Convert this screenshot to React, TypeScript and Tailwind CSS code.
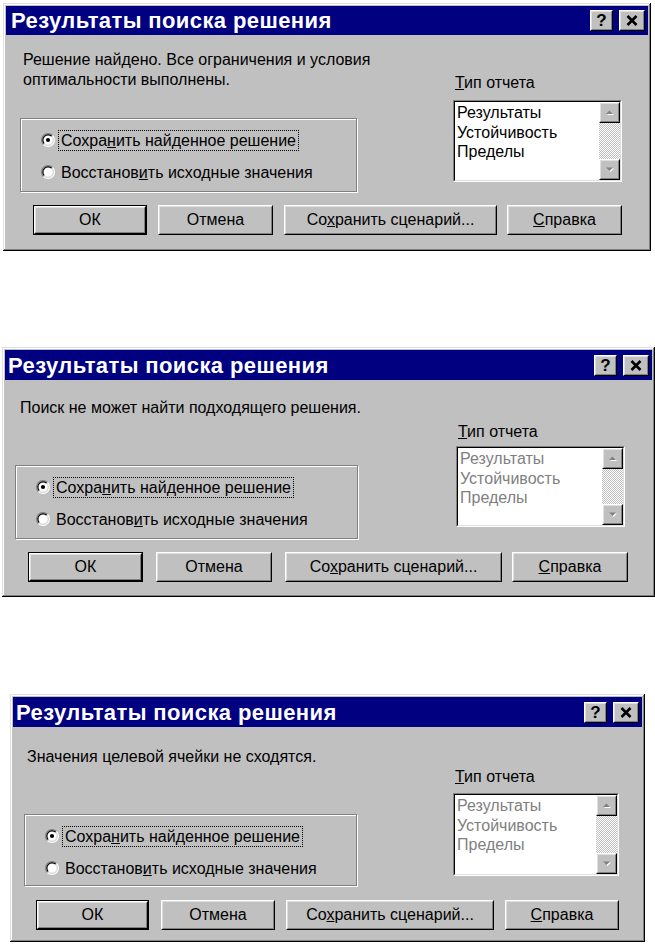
import React from 'react';

type Cfg = {
  box: string;
  titleH: string;
  titlePl: string;
  msg: string[];
  msgCls: string;
  groupCls: string;
  rightCls: string;
  labelCls: string;
  listCls: string;
  btnRow: string;
  btns: [string, string, string, string];
  dim: boolean;
};

const dialogs: Cfg[] = [
  {
    box: 'ml-[3px] mt-[3px] w-[648px] h-[248px]',
    titleH: 'h-[29px]',
    titlePl: 'pl-[5px]',
    msg: ['Решение найдено. Все ограничения и условия', 'оптимальности выполнены.'],
    msgCls: 'pl-[17px] pt-[15px]',
    groupCls: 'ml-[14px] mt-[28px] w-[337px] h-[74px]',
    rightCls: 'mr-[26px] pt-[38px]',
    labelCls: 'pl-[2px]',
    listCls: 'mt-[7px] w-[169px] h-[82px]',
    btnRow: 'mt-[13px] pl-[27px]',
    btns: ['w-[114px]', 'ml-[11px] w-[115px]', 'ml-[11px] w-[213px]', 'ml-[10px] w-[115px]'],
    dim: false,
  },
  {
    box: 'ml-[2px] mt-[96px] w-[653px] h-[250px]',
    titleH: 'h-[30px]',
    titlePl: 'pl-[3px]',
    msg: ['Поиск не может найти подходящего решения.'],
    msgCls: 'pl-[15px] pt-[18px]',
    groupCls: 'ml-[10px] mt-[47px] w-[343px] h-[74px]',
    rightCls: 'mr-[27px] pt-[42px]',
    labelCls: 'pl-[2px]',
    listCls: 'mt-[4px] w-[169px] h-[81px]',
    btnRow: 'mt-[13px] pl-[23px]',
    btns: ['w-[115px]', 'ml-[13px] w-[116px]', 'ml-[13px] w-[217px]', 'ml-[10px] w-[116px]'],
    dim: true,
  },
  {
    box: 'ml-[10px] mt-[97px] w-[635px] h-[248px]',
    titleH: 'h-[30px]',
    titlePl: 'pl-[3px]',
    msg: ['Значения целевой ячейки не сходятся.'],
    msgCls: 'pl-[14px] pt-[20px]',
    groupCls: 'ml-[11px] mt-[47px] w-[333px] h-[72px]',
    rightCls: 'mr-[23px] pt-[40px]',
    labelCls: 'pl-[2px]',
    listCls: 'mt-[6px] w-[166px] h-[83px]',
    btnRow: 'mt-[14px] pl-[23px]',
    btns: ['w-[113px]', 'ml-[12px] w-[114px]', 'ml-[11px] w-[208px]', 'ml-[11px] w-[114px]'],
    dim: true,
  },
];

const Raised = ({ children, className = '' }: { children?: React.ReactNode; className?: string }) => (
  <div className={`border border-t-white border-l-white border-b-black border-r-black bg-[#c0c0c0] ${className}`}>
    <div className="flex h-full w-full items-center justify-center border border-t-[#dfdfdf] border-l-[#dfdfdf] border-b-[#808080] border-r-[#808080]">
      {children}
    </div>
  </div>
);

const Radio = ({ on }: { on: boolean }) => (
  <svg width="14" height="14" viewBox="0 0 12 12" className="shrink-0">
    <circle cx="6" cy="6" r="4.5" fill="#fff" />
    <path d="M2.11 9.89 A5.5 5.5 0 0 1 9.89 2.11" fill="none" stroke="#808080" strokeWidth="1" />
    <path d="M9.89 2.11 A5.5 5.5 0 0 1 2.11 9.89" fill="none" stroke="#fff" strokeWidth="1" />
    <path d="M2.82 9.18 A4.5 4.5 0 0 1 9.18 2.82" fill="none" stroke="#000" strokeWidth="1" />
    <path d="M9.18 2.82 A4.5 4.5 0 0 1 2.82 9.18" fill="none" stroke="#dfdfdf" strokeWidth="1" />
    {on && <circle cx="6" cy="6" r="1.8" fill="#000" />}
  </svg>
);

const Arrow = ({ up }: { up: boolean }) => (
  <svg width="10" height="7" viewBox="0 0 10 7">
    {up ? (
      <>
        <path d="M2 6 L5.5 2.5 L9 6 Z" fill="#fff" />
        <path d="M1 5 L4.5 1.5 L8 5 Z" fill="#808080" />
      </>
    ) : (
      <>
        <path d="M2 2.5 L5.5 6 L9 2.5 Z" fill="#fff" />
        <path d="M1 1.5 L4.5 5 L8 1.5 Z" fill="#808080" />
      </>
    )}
  </svg>
);

const Dialog = ({ c }: { c: Cfg }) => (
  <div
    className={`${c.box} flex flex-col bg-[#c0c0c0] p-[3px] shadow-[inset_-1px_-1px_0_#000,inset_1px_1px_0_#dfdfdf,inset_-2px_-2px_0_#808080,inset_2px_2px_0_#fff]`}
  >
    {/* title bar */}
    <div className={`${c.titleH} ${c.titlePl} flex shrink-0 items-center bg-[#000080] pr-[3px]`}>
      <span className="text-[22px] font-bold tracking-[0.4px] text-white">Результаты поиска решения</span>
      <div className="ml-auto flex gap-[6px]">
        <Raised className="h-[21px] w-[23px]">
          <span className="text-[17px] font-bold leading-none text-black">?</span>
        </Raised>
        <Raised className="h-[21px] w-[26px]">
          <svg width="12" height="11" viewBox="0 0 12 11">
            <path d="M1.5 1 L10.5 10 M10.5 1 L1.5 10" stroke="#000" strokeWidth="2.6" />
          </svg>
        </Raised>
      </div>
    </div>

    <div className="flex flex-1 flex-col text-[16px] text-black">
      <div className="flex">
        <div className="flex flex-col">
          <div className={`${c.msgCls} leading-[20px] whitespace-nowrap`}>
            {c.msg.map((m) => (
              <div key={m}>{m}</div>
            ))}
          </div>
          {/* option group */}
          <div className={`${c.groupCls} flex flex-col gap-[8px] border border-[#808080] pl-[20px] pt-[9px] shadow-[1px_1px_0_#fff,inset_1px_1px_0_#fff]`}>
            <div className="flex h-[24px] items-center gap-[3px]">
              <Radio on />
              <span className="border border-dotted border-black px-[2px] leading-[19px]">
                Сохра<u>н</u>ить найденное решение
              </span>
            </div>
            <div className="flex h-[24px] items-center gap-[6px]">
              <Radio on={false} />
              <span className="leading-[19px]">
                Восстанов<u>и</u>ть исходные значения
              </span>
            </div>
          </div>
        </div>

        <div className={`${c.rightCls} ml-auto flex flex-col`}>
          <div className={`${c.labelCls} leading-[20px]`}>
            <u>Т</u>ип отчета
          </div>
          <div className={`${c.listCls} border border-t-[#808080] border-l-[#808080] border-b-white border-r-white`}>
            <div className="flex h-full border border-t-black border-l-black border-b-[#dfdfdf] border-r-[#dfdfdf] bg-white">
              <div className={`flex-1 pl-[2px] pt-[1px] leading-[19.5px] ${c.dim ? 'text-[#808080]' : 'text-black'}`}>
                <div>Результаты</div>
                <div>Устойчивость</div>
                <div>Пределы</div>
              </div>
              <div className="flex w-[21px] flex-col">
                <Raised className="h-[21px] w-full">
                  <Arrow up />
                </Raised>
                <div className="flex-1 bg-[image:repeating-conic-gradient(#c0c0c0_0%_25%,#ffffff_0%_50%)] bg-[length:2px_2px]" />
                <Raised className="h-[21px] w-full">
                  <Arrow up={false} />
                </Raised>
              </div>
            </div>
          </div>
        </div>
      </div>

      {/* buttons */}
      <div className={`${c.btnRow} flex`}>
        <div className={`${c.btns[0]} h-[30px] border border-black`}>
          <Raised className="h-full w-full">ОК</Raised>
        </div>
        <Raised className={`${c.btns[1]} h-[30px]`}>Отмена</Raised>
        <Raised className={`${c.btns[2]} h-[30px]`}>
          <span>
            Со<u>х</u>ранить сценарий...
          </span>
        </Raised>
        <Raised className={`${c.btns[3]} h-[30px]`}>
          <span>
            <u>С</u>правка
          </span>
        </Raised>
      </div>
    </div>
  </div>
);

export default function App() {
  return (
    <div className="flex h-[945px] w-[655px] flex-col overflow-hidden bg-white font-['Liberation_Sans',Arial,sans-serif]">
      {dialogs.map((c, i) => (
        <Dialog key={i} c={c} />
      ))}
    </div>
  );
}
